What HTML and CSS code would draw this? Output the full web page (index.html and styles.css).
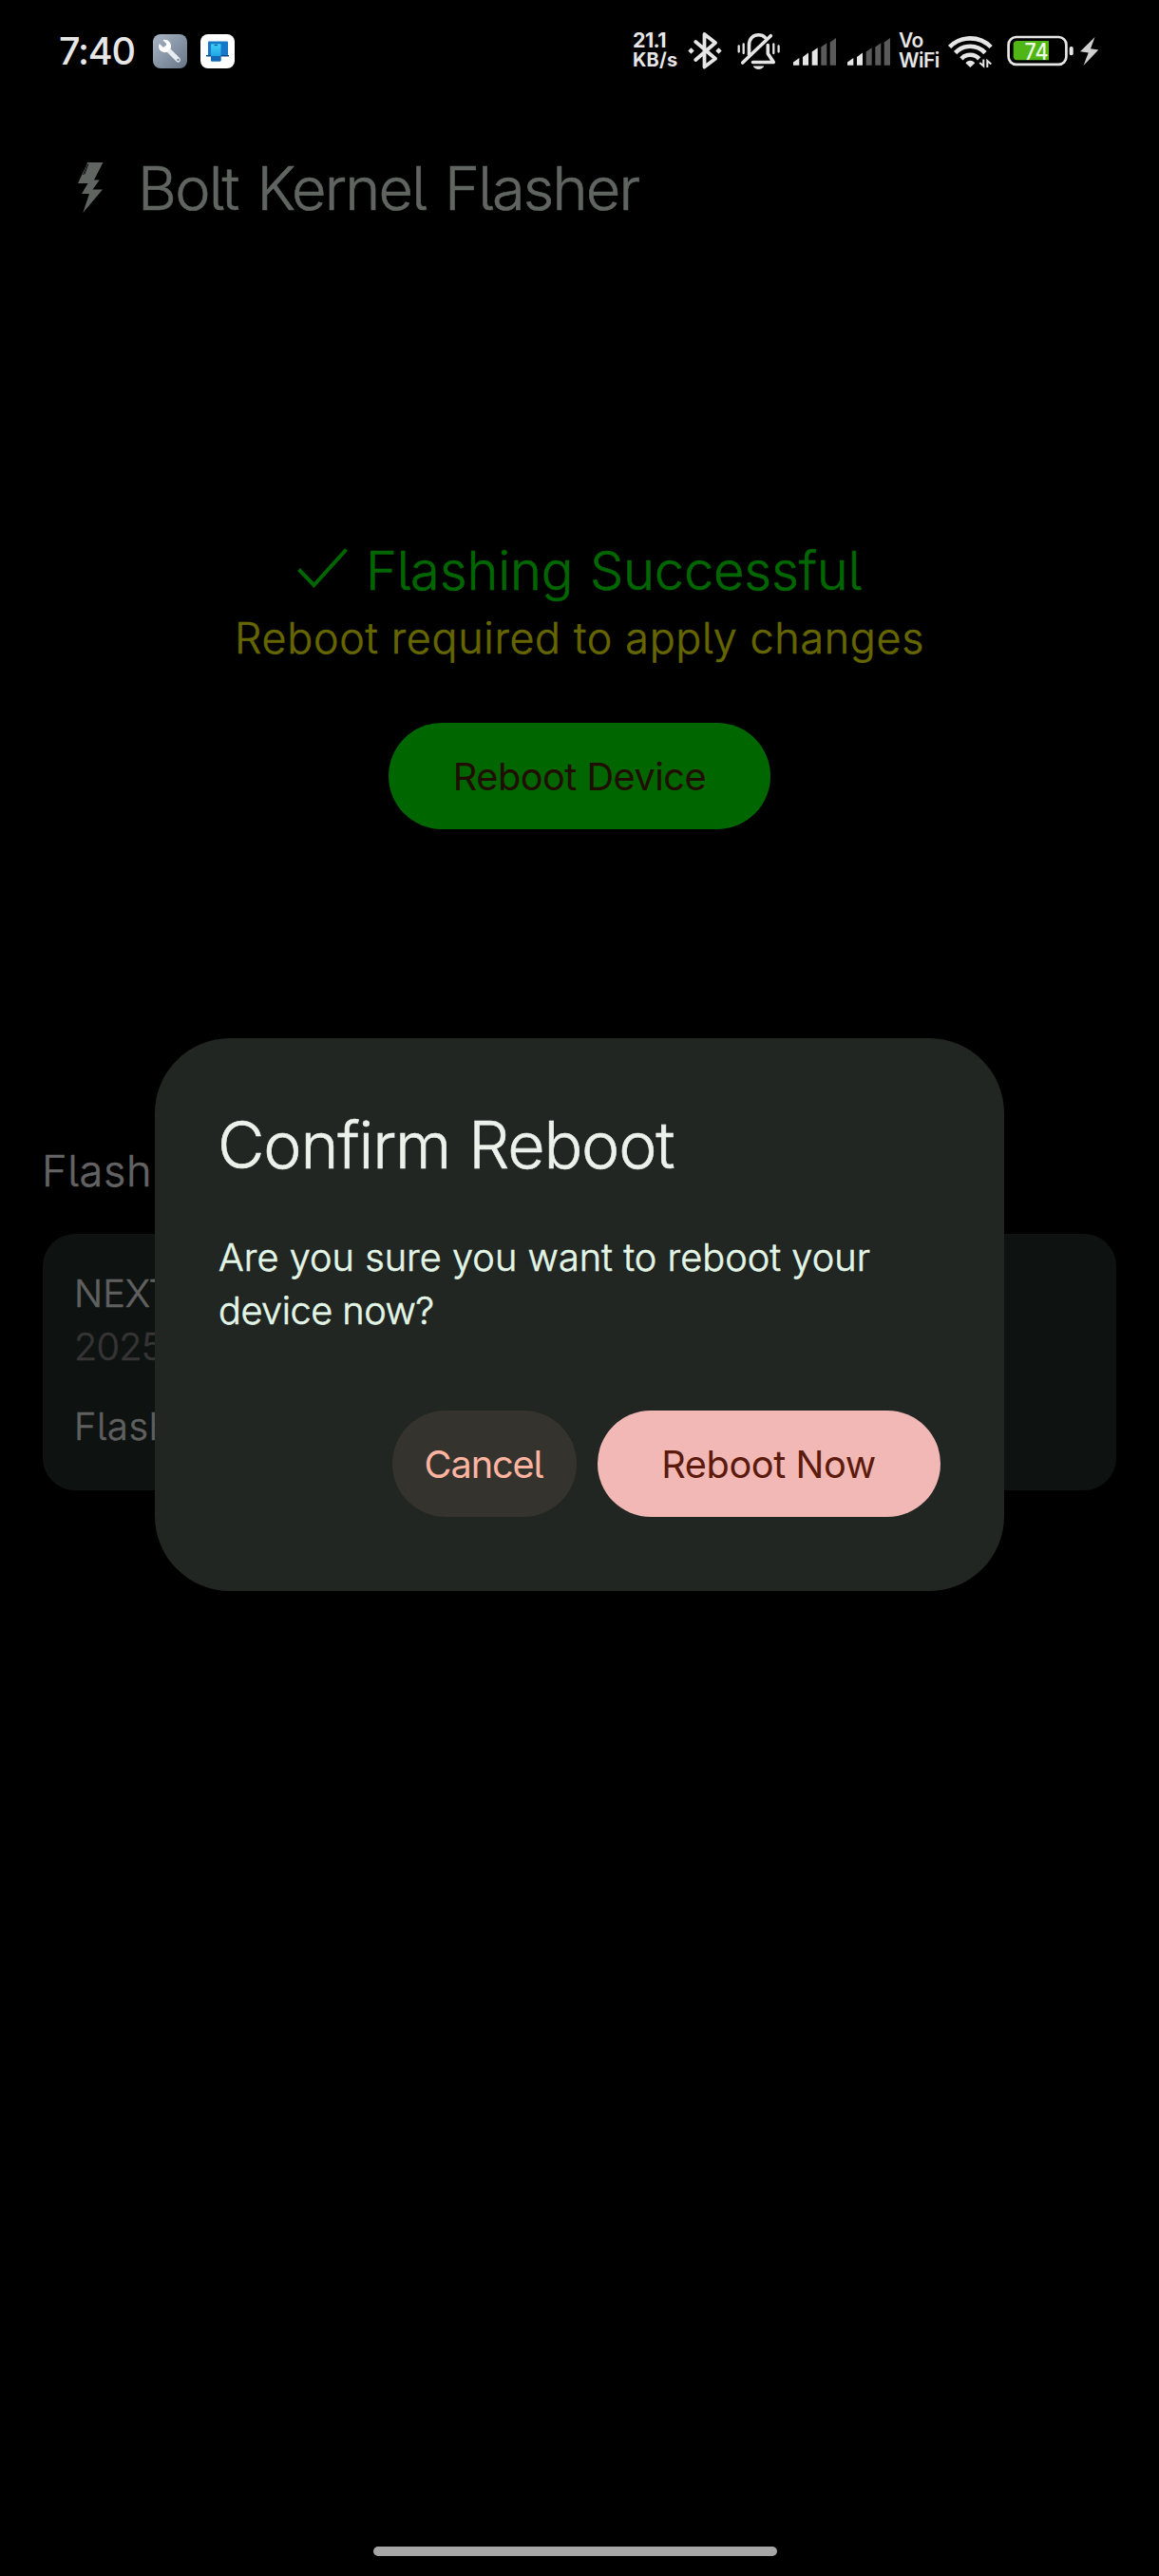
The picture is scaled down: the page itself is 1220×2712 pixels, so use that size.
FILE: index.html
```
<!DOCTYPE html>
<html lang="en">
<head>
<meta charset="utf-8">
<title>Bolt Kernel Flasher</title>
<link rel="stylesheet" href="styles.css">
</head>
<body>
<div class="screen">
  <header class="status">
    <span class="clock">7:40</span>
    <svg class="app-icon" viewBox="0 0 36 36">
      <defs><linearGradient id="steel" x1="0" y1="0" x2="1" y2="1"><stop offset="0" stop-color="#a9b5c5"/><stop offset="1" stop-color="#667587"/></linearGradient></defs>
      <rect width="36" height="36" rx="8" fill="url(#steel)"/>
      <path d="M14 14.5L26.500 27" stroke="#e8edf2" stroke-width="5" stroke-linecap="round"/>
      <path d="M10.500 6.200L14.300 10.200L13.700 13.200L10.700 13.700L6.700 10C5.300 13 6.300 16.300 8.700 18C10.700 19.300 13 19.400 15 18.700L18.700 15C19.500 12.500 19 9.700 17 7.700C15.200 6 12.700 5.300 10.500 6.200Z" fill="#fff"/>
      <circle cx="26.500" cy="27" r="1.300" fill="#7b899b"/>
    </svg>
    <svg class="app-icon second" viewBox="0 0 36 36">
      <defs><linearGradient id="sky" x1="0" y1="0" x2="0" y2="1"><stop offset="0" stop-color="#3fd0f7"/><stop offset="1" stop-color="#1590dd"/></linearGradient></defs>
      <rect width="36" height="36" rx="8" fill="#fff"/>
      <rect x="8" y="7.500" width="21" height="15.500" rx="1" fill="#1878c8"/>
      <path d="M6 22H30V23.500H6Z" fill="#0c4a8c"/>
      <rect x="11" y="10.300" width="10.500" height="18.300" rx="1" fill="url(#sky)"/>
      <path d="M11 23H21.500V27.600A1 1 0 0 1 20.500 28.600H12A1 1 0 0 1 11 27.600Z" fill="#1467b4"/>
      <path d="M14.500 11.500H18" stroke="#0c4a8c" stroke-width="1.200"/>
    </svg>
    <span class="stack net"><span class="rate">21.1</span><span class="unit">KB/s</span></span>
    <svg class="bt" width="36" height="40" viewBox="724 33 36 40" fill="none" stroke="#e6e6e6" stroke-width="3.800" stroke-linejoin="round" stroke-linecap="round">
      <path d="M732.300 44L753 61.700L741.500 70.500V36L753 45L732.300 63"/>
      <path d="M724.300 53.500L727.500 50.300L730.700 53.500L727.500 56.700ZM753.300 53.500L756.500 50.300L759.700 53.500L756.500 56.700Z" fill="#e6e6e6" stroke="none"/>
    </svg>
    <svg class="bell" width="45" height="40" viewBox="776 33 45 40" fill="none" stroke="#e6e6e6" stroke-width="3.600" stroke-linejoin="round" stroke-linecap="round">
      <path d="M781.700 66L811.300 37.700"/>
      <path d="M788.500 57.500V47.500C788.500 40.500 793 36.800 798.500 36.800C801 36.800 803.500 37.600 805.300 39.500"/>
      <path d="M808.300 47.500V56.500L814.300 65.500H792.500"/>
      <path d="M792.700 69.500H804.300C802.500 74 794.500 74 792.700 69.500Z" fill="#e6e6e6" stroke="none"/>
      <path d="M777.700 48.500V54.500M782.700 46.500V56M814.300 46.500V56M819.600 48.500V54.500" stroke-width="2.300"/>
    </svg>
    <svg class="sig one" width="45" height="29" viewBox="0 0 45 29" fill="#5a5a5a">
      <path d="M0 25.500L6.300 21V28.700H0Z" fill="#e6e6e6"/>
      <path d="M10 20L16 15.500V28.700H10Z" fill="#e6e6e6"/>
      <path d="M19.700 14.500L25.700 10.300V28.700H19.700Z" fill="#e6e6e6"/>
      <path d="M29.300 9.500L35.300 5.300V28.700H29.300Z"/>
      <path d="M38.700 4.500L45 0V28.700H38.700Z"/>
    </svg>
    <svg class="sig two" width="45" height="29" viewBox="0 0 45 29" fill="#5a5a5a">
      <path d="M0 25.500L6.300 21V28.700H0Z" fill="#e6e6e6"/>
      <path d="M10 20L16 15.500V28.700H10Z" fill="#e6e6e6"/>
      <path d="M19.700 14.500L25.700 10.300V28.700H19.700Z"/>
      <path d="M29.300 9.500L35.300 5.300V28.700H29.300Z"/>
      <path d="M38.700 4.500L45 0V28.700H38.700Z"/>
    </svg>
    <span class="stack vo"><span>Vo</span><span>WiFi</span></span>
    <svg class="wifi" width="48" height="40" viewBox="998 33 48 40" fill="none" stroke="#e6e6e6" stroke-width="4.600">
      <path d="M999.500 49.500A30.500 30.500 0 0 1 1043.100 49.500"/>
      <path d="M1005.600 55.600A21.500 21.500 0 0 1 1037 55.600"/>
      <path d="M1011.900 61.800A13 13 0 0 1 1030.700 61.800"/>
      <path d="M1016.500 66.500C1018 62.800 1024.600 62.800 1026.100 66.500L1021.300 71Z" fill="#e6e6e6" stroke="none"/>
      <path d="M1035.300 62.500V69.500L1031.300 66M1039.300 71V64L1043.300 67.500" stroke-width="2"/>
    </svg>
    <svg class="battery" width="70" height="40" viewBox="1060 33 70 40">
      <rect x="1061.600" y="39" width="60.800" height="28.800" rx="8" fill="none" stroke="#e6e6e6" stroke-width="2.700"/>
      <path d="M1104 43H1070.700A4 4 0 0 0 1066.700 47V59.300A4 4 0 0 0 1070.700 63.300H1104Z" fill="#4fb615"/>
      <rect x="1125.700" y="49" width="4" height="9.300" rx="1.800" fill="#e6e6e6"/>
      <text class="level" x="1078.500" y="63" textLength="25" lengthAdjust="spacingAndGlyphs">74</text>
    </svg>
    <svg class="charge" width="20" height="40" viewBox="1137 33 20 40"><path d="M1152.500 39L1137 54.300L1145.700 55.500L1140.500 69L1156.300 52.500L1148 51.300Z" fill="#cfcfcf"/></svg>
  </header>

  <div class="title">
    <svg class="bolt" width="28" height="54" viewBox="0 0 28 54">
      <path d="M10 0H26.500L17 18.500H22.800L15.500 28.500H26L5.300 53L12 33H4L10.500 22H0Z" fill="#606562"/>
      <path d="M11 1.500L7 12.500M9.500 1.500L5.500 13" stroke="#000" stroke-width=".8"/>
    </svg>
    <h1>Bolt Kernel Flasher</h1>
  </div>

  <section class="result">
    <div class="success">
      <svg width="54" height="44" viewBox="0 0 54 44" fill="none" stroke="#006600" stroke-width="4"><path d="M1.500 22.500L17.500 39L51.500 1.500"/></svg>
      <span>Flashing Successful</span>
    </div>
    <p class="required">Reboot required to apply changes</p>
    <button class="pill reboot-device">Reboot Device</button>
  </section>

  <section class="history">
    <h2>Flash</h2>
    <div class="card">
      <p class="name">NEXT</p>
      <p class="date">2025</p>
      <p class="kind">Flash</p>
    </div>
  </section>

  <div class="dialog">
    <h2>Confirm Reboot</h2>
    <p>Are you sure you want to reboot your<br><span class="second-line">device now?</span></p>
    <div class="actions">
      <button class="pill cancel">Cancel</button>
      <button class="pill confirm">Reboot Now</button>
    </div>
  </div>

  <div class="home-bar"></div>
</div>
</body>
</html>
```

FILE: styles.css
```
* { box-sizing: border-box; }
body { margin: 0; background: #000; }
h1, h2, p { margin: 0; font-weight: 300; }

.screen {
  position: relative;
  display: flex;
  flex-direction: column;
  width: 1220px;
  height: 2712px;
  overflow: hidden;
  background: #000;
  font-family: Inter, "Noto Sans", sans-serif;
  font-weight: 300;
  font-feature-settings: "cv05";
  white-space: nowrap;
  -webkit-text-stroke: .6px currentColor;
}

/* Status bar */
.status {
  display: flex;
  align-items: center;
  height: 106px;
  padding-left: 62px;
  color: #e6e6e6;
  -webkit-text-stroke: 0;
}
.status svg { flex: none; }
.clock { width: 99px; font-size: 39.500px; font-weight: 500; letter-spacing: -1.200px; line-height: 48px; padding-top: 2px; }
.app-icon { width: 36px; height: 36px; margin-top: 2px; }
.app-icon.second { margin-left: 14px; }
.stack { display: flex; flex-direction: column; flex: none; font-weight: 600; line-height: 21px; }
.net { width: 58px; margin-left: 419px; font-size: 20px; font-weight: 700; }
.rate { font-size: 21.500px; letter-spacing: -.6px; }
.unit { letter-spacing: .2px; }
.bell { margin-left: 16px; }
.sig { margin-top: 3px; }
.sig.one { margin-left: 14px; }
.sig.two { margin-left: 12px; }
.vo { width: 52px; margin-left: 9px; font-size: 21px; letter-spacing: -.5px; }
.wifi { width: 48px; }
.battery { margin-left: 14px; }
.charge { margin-left: 7px; }
.level { font-size: 24.500px; font-weight: 500; fill: #eefbe4; }

/* App header */
.title { display: flex; align-items: center; height: 56px; margin-top: 64px; padding-left: 82px; color: #606562; }
h1 { margin-left: 35px; font-size: 63px; line-height: 56px; letter-spacing: -1.750px; word-spacing: 4px; }

/* Flash result */
.result { display: flex; flex-direction: column; align-items: center; padding-top: 336px; }
.success { display: flex; align-items: center; height: 78px; gap: 18px; color: #060; font-size: 56px; letter-spacing: -.200px; word-spacing: 2px; }
.success svg { margin-top: -4px; }
.required { height: 64px; color: #666600; font-size: 44.800px; line-height: 64px; letter-spacing: .700px; }
.pill {
  display: block;
  height: 112px;
  padding: 0;
  border: 0;
  border-radius: 56px;
  font: inherit;
  font-feature-settings: inherit;
  font-size: 39.700px;
  line-height: 112px;
  text-align: center;
  font-weight: 400;
  -webkit-text-stroke: 0;
}
.reboot-device { width: 402px; margin-top: 57px; padding-top: 1px; background: #060; color: #200d00; letter-spacing: -.5px; }

/* Flash history */
.history { padding: 324px 45px 0; }
.history h2 { height: 71px; margin-left: -1px; color: #636363; font-size: 45.200px; line-height: 71px; letter-spacing: .6px; }
.card { height: 270px; margin-top: 31px; padding: 35px 33px; border-radius: 34px; background: #0e1311; color: #606060; font-size: 39.700px; line-height: 56px; }
.card .date { color: #363434; letter-spacing: -.8px; }
.card .kind { margin-top: 28px; letter-spacing: .7px; }

/* Dialog floats above the dimmed page */
.dialog {
  position: absolute;
  top: 1093px;
  left: 163px;
  width: 894px;
  height: 582px;
  padding: 67px;
  border-radius: 79px;
  background: #212622;
  color: #ebf2ec;
}
.dialog h2 { height: 90px; margin-left: -1px; font-size: 68px; line-height: 90px; letter-spacing: -1.200px; word-spacing: 1px; }
.dialog p { margin-top: 46px; color: #e2f5e6; font-size: 39.700px; line-height: 56px; letter-spacing: .040px; }
.second-line { letter-spacing: -.5px; }
.actions { display: flex; justify-content: flex-end; gap: 22px; margin-top: 77px; }
.cancel { width: 194px; background: #35332d; color: #ffb4a2; letter-spacing: -1.100px; padding: 1px 2px 0 0; }
.confirm { width: 361px; background: #f2b8b5; color: #5c1a0c; letter-spacing: -.4px; padding: 1px 1px 0 0; }

.home-bar { width: 425px; height: 10px; margin: auto 0 21px 393px; border-radius: 5px; background: #a6a6a6; }
```
